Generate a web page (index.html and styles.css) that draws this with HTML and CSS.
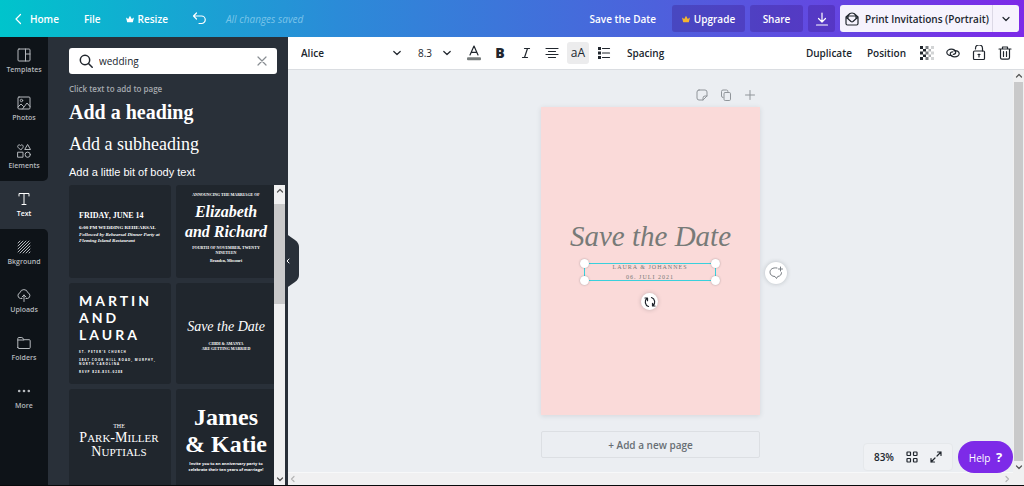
FILE: index.html
```
<!DOCTYPE html>
<html lang="en">
<head>
<meta charset="utf-8">
<title>Save the Date</title>
<link rel="stylesheet" href="styles.css">
</head>
<body>
<header class="topbar">
  <a class="nav-link nav-home" href="#"><svg class="i8" viewBox="0 0 8 12"><path d="M6.500 1.500 2 6l4.500 4.500"/></svg>Home</a>
  <button class="nav-link">File</button>
  <button class="nav-link nav-resize"><svg class="crown" viewBox="0 0 10 10"><path d="M1.500 9 0 3l2.800 2L5 1l2.200 4L10 3 8.500 9z"/></svg>Resize</button>
  <button class="nav-link nav-undo" aria-label="Undo"><svg class="i14" viewBox="0 0 14 14"><path d="M4.500 1 1.500 4l3 3M1.500 4h8a3.500 3.500 0 0 1 0 7.500H7"/></svg></button>
  <span class="saved">All changes saved</span>
  <div class="top-actions">
    <button class="nav-link nav-title">Save the Date</button>
    <button class="top-btn upgrade"><svg class="crown gold" viewBox="0 0 10 10"><path d="M1.500 9 0 3l2.800 2L5 1l2.200 4L10 3 8.500 9z"/></svg>Upgrade</button>
    <button class="top-btn share">Share</button>
    <button class="top-btn download" aria-label="Download"><svg class="i14" viewBox="0 0 14 14"><path d="M7 1v9M3.500 6.500 7 10l3.500-3.500M1.500 13h11"/></svg></button>
    <div class="print-group">
      <button class="print"><svg class="i14" viewBox="0 0 14 14"><path d="M1 5v6.500q0 1.500 1.500 1.500h9q1.500 0 1.500-1.500V5L9 1.500q-2-1-4 0L1 5l5 4.500q1 .7 2 0L13 5M3 6.500V4h8v2.500"/></svg>Print Invitations (Portrait)</button>
      <button class="print-more" aria-label="More print options"><svg class="i8" viewBox="0 0 8 8"><path d="M1 2.500 4 5.500 7 2.500"/></svg></button>
    </div>
  </div>
</header>

<div class="workspace">
  <nav class="rail">
    <div class="rail-upper">
      <a class="rail-item" href="#"><svg class="i14" viewBox="0 0 14 14"><rect x="1" y="1" width="12" height="12" rx="1"/><path d="M8.500 1v12M8.500 6H13"/></svg>Templates</a>
      <a class="rail-item" href="#"><svg class="i14" viewBox="0 0 14 14"><rect x="1" y="1" width="12" height="12" rx="1"/><circle cx="4.500" cy="4.500" r="1.200"/><path d="m1 11 3-3 2.500 2.500M5.500 13l4.500-6 3 3.500"/></svg>Photos</a>
      <a class="rail-item" href="#"><svg class="i14" viewBox="0 0 14 14"><path d="M3.500 5.800.9 3.200C-.1 1.600 2.300-.2 3.500 1.600c1.200-1.800 3.600 0 2.600 1.600zM10.800.8l2.700 4.700H8.100z"/><rect x="1" y="8.200" width="5" height="5"/><circle cx="10.700" cy="10.700" r="2.600"/></svg>Elements</a>
    </div>
    <a class="rail-item active" href="#"><svg class="i14" viewBox="0 0 14 14"><path d="M2 4V1.500h10V4M7 1.500v11M5 12.500h4"/></svg>Text</a>
    <div class="rail-lower">
      <a class="rail-item" href="#"><svg class="i14" viewBox="0 0 14 14"><path d="M1 3l2-2M1 6l5-5M1 9l8-8M1 12 12 1M3 13 13 3M6 13l7-7M9 13l4-4M12 13l1-1"/></svg>Bkground</a>
      <a class="rail-item" href="#"><svg class="i14" viewBox="0 0 14 14"><path d="M5 10.500H3.500A3 3 0 0 1 3 4.700a4 4 0 0 1 7.800 0 3 3 0 0 1-.3 5.800H9M7 13.500V7M5 9l2-2 2 2"/></svg>Uploads</a>
      <a class="rail-item" href="#"><svg class="i14" viewBox="0 0 14 14"><path d="M.8 11.500v-9q0-1 1-1h3q1 0 1.500 1.500l.3.700h5.600q1 0 1 1v6.800q0 1-1 1H1.800q-1 0-1-1zM.8 4h6"/></svg>Folders</a>
      <a class="rail-item" href="#"><svg class="i14 solid" viewBox="0 0 14 14"><circle cx="2.200" cy="7" r="1.300"/><circle cx="7" cy="7" r="1.300"/><circle cx="11.800" cy="7" r="1.300"/></svg>More</a>
    </div>
  </nav>

  <aside class="panel">
    <div class="search">
      <svg class="i14" viewBox="0 0 14 14"><circle cx="6" cy="6" r="4.700"/><path d="m9.500 9.500 3.700 3.700"/></svg>
      <input type="text" value="wedding" aria-label="Search text">
      <button class="clear" aria-label="Clear search"><svg class="i10" viewBox="0 0 10 10"><path d="m1 1 8 8M9 1 1 9"/></svg></button>
    </div>
    <p class="hint">Click text to add to page</p>
    <button class="add-heading">Add a heading</button>
    <button class="add-subheading">Add a subheading</button>
    <button class="add-body">Add a little bit of body text</button>
    <div class="results">
      <div class="cards">
        <article class="card card-friday">
          <h3>FRIDAY, JUNE 14</h3>
          <p class="strong">6:00 PM WEDDING REHEARSAL</p>
          <p class="note">Followed by Rehearsal Dinner Party at Fleming Island Restaurant</p>
        </article>
        <article class="card card-elizabeth">
          <p class="tiny">ANNOUNCING THE MARRIAGE OF</p>
          <h3>Elizabeth<br>and Richard</h3>
          <p class="date">FOURTH OF NOVEMBER, TWENTY<br>NINETEEN</p>
          <p class="tiny">Branden, Missouri</p>
        </article>
        <article class="card card-martin">
          <h3>MARTIN<br>AND<br>LAURA</h3>
          <p>ST. PETER'S CHURCH</p>
          <p>3867 COOK HILL ROAD, MURPHY,<br>NORTH CAROLINA</p>
          <p>RSVP 828-835-0288</p>
        </article>
        <article class="card card-save">
          <h3>Save the Date</h3>
          <p>CHIDI &amp; AMANYA<br>ARE GETTING MARRIED</p>
        </article>
        <article class="card card-park">
          <p>THE</p>
          <h3>P<small>ARK</small>-M<small>ILLER</small><br>N<small>UPTIALS</small></h3>
        </article>
        <article class="card card-james">
          <h3>James<br>&amp; Katie</h3>
          <p>Invite you to an anniversary party to<br>celebrate their ten years of marriage!</p>
        </article>
      </div>
      <div class="scroll-v panel-scroll">
        <svg class="i8" viewBox="0 0 8 8"><path d="M1.500 5 4 2.500 6.500 5"/></svg>
        <span class="thumb"></span>
        <svg class="i8" viewBox="0 0 8 8"><path d="M1.500 3 4 5.500 6.500 3"/></svg>
      </div>
    </div>
    <button class="collapse" aria-label="Hide panel"><svg viewBox="0 0 14 56"><path class="tab" d="M0 0 10 7q4 3 4 7v28q0 4-4 7L0 56z"/><path class="arrow" d="M4 26 2 28l2 2"/></svg></button>
  </aside>

  <main class="editor">
    <div class="toolbar">
      <label class="pick font-pick"><select aria-label="Font"><option>Alice</option></select><svg class="i8" viewBox="0 0 8 8"><path d="M.8 2.500 4 5.500 7.200 2.500"/></svg></label>
      <label class="pick size-pick"><select aria-label="Font size"><option>8.3</option></select><svg class="i8" viewBox="0 0 8 8"><path d="M.8 2.500 4 5.500 7.200 2.500"/></svg></label>
      <div class="tools">
        <button class="tool" aria-label="Text color"><svg class="i16" viewBox="0 0 16 16"><path d="m4 10 4-9 4 9M5.300 7.300h5.400"/><rect class="swatch" x="1" y="12.300" width="14" height="3" rx="1"/></svg></button>
        <button class="tool bold" aria-label="Bold">B</button>
        <button class="tool" aria-label="Italic"><svg class="i14" viewBox="0 0 14 14"><path d="M5.500 2.500h5M3.500 11.500h5M8.500 2.500l-3 9"/></svg></button>
        <button class="tool" aria-label="Align center"><svg class="i14" viewBox="0 0 14 14"><path d="M1 2.500h12M3.500 5.500h7M1 8.500h12M3.500 11.500h7"/></svg></button>
        <button class="tool case" aria-label="Uppercase">aA</button>
        <button class="tool" aria-label="List"><svg class="i14" viewBox="0 0 14 14"><path d="M5.500 2.500h7M5.500 7h7M5.500 11.500h7"/><path class="dots" d="M1 1h3v3H1zM1 5.500h3v3H1zM1 10h3v3H1z"/></svg></button>
      </div>
      <button class="word spacing">Spacing</button>
      <div class="tools-right">
        <button class="word">Duplicate</button>
        <button class="word">Position</button>
        <div class="tools">
          <button class="tool" aria-label="Transparency"><svg class="i14 checks" viewBox="0 0 14 14"><path d="M0 0h3v3H0zM0 5.500h3v3H0zM0 11h3v3H0zM3 3h3v2.500H3zM3 8.500h3V11H3z"/><path opacity=".6" d="M5.500 0h3v3h-3zM5.500 5.500h3v3h-3zM5.500 11h3v3h-3z"/><path opacity=".35" d="M8.500 3h2.500v2.500H8.500zM8.500 8.500h2.500V11H8.500z"/><path opacity=".2" d="M11 0h3v3h-3zM11 5.500h3v3h-3zM11 11h3v3h-3z"/></svg></button>
          <button class="tool" aria-label="Link"><svg class="i14" viewBox="0 0 14 14"><path d="M6 9.300C3.500 10 1 8.700 .8 6.700.7 4.500 3 3.200 5.300 3.200c2.700 0 4.500 1.300 4.400 3.100 0 1.200-1 2-2.400 2M8 4.900c2.600-.7 5 .5 5.200 2.500.1 2.200-2.200 3.500-4.500 3.500-2.700 0-4.500-1.300-4.400-3.100 0-1.200 1-2 2.400-2"/></svg></button>
          <button class="tool" aria-label="Lock"><svg class="i16" viewBox="0 0 16 16"><rect x="2.500" y="6" width="11" height="8.500" rx="1"/><path d="M4.500 4V3.500a3.500 3.500 0 0 1 7 0V6M8 9v3M7 9.500h2"/></svg></button>
          <button class="tool" aria-label="Delete"><svg class="i14" viewBox="0 0 14 14"><path d="M1 3h12M4.500 3V1h5v2M2.500 3v8.500q0 1.700 1.500 1.700h6q1.500 0 1.500-1.700V3M5.500 5.500v5M8.500 5.500v5"/></svg></button>
        </div>
      </div>
    </div>

    <div class="stage">
      <div class="canvas">
        <div class="sheet">
          <div class="page-tools">
            <button aria-label="Notes"><svg class="i12" viewBox="0 0 12 12"><path d="M3 1h6q2 0 2 2v4l-4 4H3q-2 0-2-2V3q0-2 2-2zM7 11V9q0-2 2-2h2"/></svg></button>
            <button aria-label="Copy page"><svg class="i12" viewBox="0 0 12 12"><path d="M3 8.500q-1.500 0-1.500-1.500V2.500q0-1.500 1.500-1.500h3.500Q8 1 8 2.500"/><rect x="4" y="3.500" width="6.500" height="8" rx="1.200"/></svg></button>
            <button aria-label="Add page"><svg class="i12" viewBox="0 0 12 12"><path d="M6 1.500v9M1.500 6h9"/></svg></button>
          </div>
          <div class="page">
            <h1>Save the Date</h1>
            <div class="selection">
              <p>LAURA &amp; JOHANNES<br>06. JULI 2021</p>
              <i class="handle tl"></i><i class="handle tr"></i><i class="handle bl"></i><i class="handle br"></i>
              <button class="round rotate" aria-label="Rotate"><svg class="i12" viewBox="0 0 12 12"><path d="M4.500 10.500A4.800 4.800 0 0 1 3 2.300M1 2h2.500v2.700M7.500 1.500A4.800 4.800 0 0 1 9 9.700M11 10H8.500V7.300"/></svg></button>
            </div>
            <button class="round comment" aria-label="Add comment"><svg class="i14" viewBox="0 0 14 14"><path d="M8 2C3.500 1.200 1 3.500 1 6.200 1 8.700 3 10.500 6 10.500l1.500 2 1.200-2c2.500-.3 3.800-1.800 3.800-3.800M11.500 1v4M9.500 3h4"/></svg></button>
          </div>
          <button class="add-page">+ Add a new page</button>
        </div>
        <div class="zoombar">
          <button class="zoom">83%</button>
          <button aria-label="Grid view"><svg class="i12" viewBox="0 0 12 12"><rect x="1" y="1" width="3.500" height="3.500" rx=".5"/><rect x="7.500" y="1" width="3.500" height="3.500" rx=".5"/><rect x="1" y="7.500" width="3.500" height="3.500" rx=".5"/><rect x="7.500" y="7.500" width="3.500" height="3.500" rx=".5"/></svg></button>
          <button aria-label="Full screen"><svg class="i12" viewBox="0 0 12 12"><path d="M7.500 1H11v3.500M11 1 7 5M4.500 11H1V7.500M1 11l4-4"/></svg></button>
        </div>
        <button class="help">Help <b>?</b></button>
      </div>
      <div class="scroll-v">
        <svg class="i8" viewBox="0 0 8 8"><path d="M1.500 5 4 2.500 6.500 5"/></svg>
        <span class="thumb"></span>
        <svg class="i8" viewBox="0 0 8 8"><path d="M1.500 3 4 5.500 6.500 3"/></svg>
      </div>
    </div>
    <div class="scroll-h">
      <svg class="i8" viewBox="0 0 8 8"><path d="M5 1.500 2.500 4 5 6.500"/></svg>
      <svg class="i8" viewBox="0 0 8 8"><path d="M3 1.500 5.500 4 3 6.500"/></svg>
    </div>
  </main>
</div>
</body>
</html>
```
FILE: styles.css
```
* { box-sizing: border-box; }
body {
  margin: 0;
  height: 100vh;
  display: flex;
  flex-direction: column;
  overflow: hidden;
  background: #ebeef2;
  border-bottom: 1px solid #08090b;
  font: 600 10px/16px "Open Sans", sans-serif;
  color: #20262d;
}
button, input, select { font: inherit; color: inherit; border: 0; background: none; padding: 0; margin: 0; }
a { color: inherit; text-decoration: none; }
h1, h3, p { margin: 0; }
svg { display: block; flex: none; fill: none; stroke: currentColor; stroke-width: 1.2; stroke-linecap: round; stroke-linejoin: round; }
.i8 { width: 8px; height: 8px; }
.i10 { width: 10px; height: 10px; }
.i12 { width: 12px; height: 12px; }
.i14 { width: 14px; height: 14px; }
.i16 { width: 16px; height: 16px; }

/* Top bar */
.topbar {
  flex: none;
  height: 37px;
  padding: 0 5px 0 14px;
  display: flex;
  align-items: center;
  background: linear-gradient(90deg, #00c4cc, #2b8bd8 33%, #4d61dc 64%, #7d2ae8);
  color: #fff;
}
.nav-link { display: flex; align-items: center; white-space: nowrap; }
.nav-home { gap: 8px; margin-right: 25px; }
.nav-home svg { height: 12px; }
.nav-resize { gap: 4px; margin: 0 24px 0 25px; }
.saved { margin-left: 20px; color: #8fd0ef; font-weight: 400; font-style: italic; white-space: nowrap; opacity: .8; }
.crown { width: 8px; height: 10px; fill: currentColor; stroke: none; }
.gold { color: #f5b52e; }
.top-actions { display: flex; align-items: center; gap: 5px; margin-left: auto; }
.nav-title { margin-right: 11px; }
.top-btn { height: 27px; display: flex; align-items: center; justify-content: center; gap: 4px; border-radius: 3px; background: rgba(55, 20, 130, .3); }
.upgrade { width: 73px; }
.share { width: 53px; }
.download { width: 27px; }
.print-group { display: flex; height: 27px; border-radius: 3px; background: #f6f3fd; color: #20262d; }
.print { display: flex; align-items: center; gap: 6px; width: 152px; padding-left: 5px; white-space: nowrap; }
.print-more { width: 27px; display: grid; place-items: center; border-left: 1px solid #dcd9e6; }

.workspace { flex: 1; min-height: 0; display: flex; }

/* Navigation rail */
.rail { width: 48px; flex: none; display: flex; flex-direction: column; background: #293039; color: #b5b9bd; }
.rail-upper, .rail-lower { background: #0e1318; }
.rail-upper { border-radius: 0 0 5px 0; }
.rail-lower { flex: 1; border-radius: 0 5px 0 0; }
.rail-item { height: 48px; padding-top: 11px; display: flex; flex-direction: column; align-items: center; gap: 2px; font-size: 7px; line-height: 12px; }
.rail-item svg { stroke-width: 1; }
.rail-item.active { color: #fff; }
.solid { fill: currentColor; stroke: none; }

/* Text panel */
.panel { position: relative; z-index: 2; width: 240px; flex: none; display: flex; flex-direction: column; align-items: flex-start; padding: 11px 3px 0 21px; background: #293039; color: #fff; }
.search { width: 208px; height: 26px; flex: none; display: flex; align-items: center; gap: 6px; padding: 0 10px; background: #fff; border-radius: 3px; color: #20262d; }
.search svg { stroke-width: 1.5; }
.search input { flex: 1; min-width: 0; font-weight: 400; outline: 0; }
.search .clear { color: #888d92; }
.search .clear svg { stroke-width: 1.2; }
.hint { margin-top: 8px; font-size: 8px; line-height: 14px; color: #a6aaaf; }
.add-heading { font: bold 20px/32px "Liberation Serif", serif; }
.add-subheading { font: 18px/32px "Liberation Serif", serif; }
.add-body { font: 11px/24px "Liberation Sans", sans-serif; }
.results { align-self: stretch; flex: 1; min-height: 0; margin-top: 1px; display: flex; }
.cards { flex: 1; min-width: 0; overflow: hidden; display: grid; grid-template-columns: 102px 102px; grid-template-rows: 93px 101px 101px; gap: 5px; }
.card { background: #20262d; border-radius: 3px; display: flex; flex-direction: column; font: bold 5px/6px "Liberation Serif", serif; white-space: nowrap; }
.card-friday { padding: 24px 10px 0; }
.card-friday h3 { font-size: 8px; line-height: 14px; }
.card-friday .strong { line-height: 9px; }
.card-friday .note { white-space: normal; font-style: italic; }
.card-elizabeth, .card-save, .card-park, .card-james { text-align: center; padding-right: 2px; }
.card-elizabeth { padding-top: 7px; }
.card-elizabeth .tiny { font-size: 4px; }
.card-elizabeth h3 { font: italic bold 16px/20px "Liberation Serif", serif; margin: 4px 0 3px; }
.card-elizabeth .date { font-size: 4px; line-height: 5px; margin-bottom: 3px; }
.card-martin { padding: 9px 10px; gap: 4px; font: bold 3px/4px "Open Sans", sans-serif; letter-spacing: 1px; }
.card-martin h3 { font: 700 14px/17px Lato, sans-serif; letter-spacing: 3px; margin-bottom: 3px; }
.card-save { justify-content: center; font-size: 4px; line-height: 5px; }
.card-save h3 { font: italic 14px/20px "Liberation Serif", serif; margin-bottom: 4px; }
.card-park { justify-content: center; padding-top: 2px; }
.card-park p { font-weight: 400; font-size: 6px; line-height: 9px; }
.card-park h3 { font: 14px/13px "Liberation Serif", serif; }
.card-park small { font-size: 11px; }
.card-james { padding-top: 15px; }
.card-james h3 { font: bold 24px/27px "Liberation Serif", serif; margin-bottom: 3px; }
.card-james p { font: bold 4px/6px "Open Sans", sans-serif; }
.collapse { position: absolute; left: 237px; top: 196px; width: 14px; height: 56px; }
.collapse svg { width: 14px; height: 56px; }
.tab { fill: #293039; stroke: none; }
.arrow { stroke: #fff; stroke-width: 1; }

/* Scroll bars */
.scroll-v { width: 11px; flex: none; display: flex; flex-direction: column; align-items: center; gap: 2px; padding: 2px 0; background: #f0f0f1; color: #555; }
.scroll-v .thumb { width: 9px; flex: 1; background: #c9c9ca; }
.panel-scroll { gap: 9px; }
.panel-scroll .thumb { width: 11px; flex: none; height: 100px; margin-bottom: auto; }
.scroll-h { height: 12px; flex: none; display: flex; align-items: center; justify-content: space-between; padding: 0 13px 0 1px; background: #f0f0f1; color: #b5b5b6; }

/* Toolbar */
.editor { flex: 1; min-width: 0; display: flex; flex-direction: column; }
.toolbar { height: 33px; flex: none; display: flex; align-items: center; padding: 0 8px 0 13px; background: #fff; border-bottom: 1px solid #dadde1; }
.pick { display: grid; align-items: center; }
.pick select { grid-area: 1 / 1; width: 100%; appearance: none; outline: 0; }
.pick svg { grid-area: 1 / 1; justify-self: end; pointer-events: none; }
.font-pick { width: 100px; margin-right: 17px; }
.size-pick { width: 33px; margin-right: 12px; font-weight: 400; }
.tools { display: flex; gap: 4px; }
.tool { width: 22px; height: 22px; display: grid; place-items: center; border-radius: 3px; }
.bold { font-size: 14px; font-weight: 800; }
.case { background: #ececed; font-size: 12px; font-weight: 400; }
.swatch { fill: #777c7c; stroke: none; }
.dots, .checks { fill: currentColor; stroke: none; }
.spacing { margin-left: 12px; }
.tools-right { margin-left: auto; display: flex; align-items: center; gap: 15px; }
.tools-right .tools { margin-left: -5px; }

/* Canvas */
.stage { flex: 1; min-height: 0; display: flex; }
.canvas { position: relative; flex: 1; display: flex; justify-content: center; padding-top: 18px; border-bottom: 1px solid #f7f8f9; }
.sheet { width: 219px; }
.page-tools { height: 19px; display: flex; align-items: flex-start; justify-content: flex-end; gap: 12px; padding: 1px 4px 0 0; color: #90959a; }
.page-tools svg { stroke-width: 1; }
.page { position: relative; height: 308px; padding: 107px 24px 0; background: #fadad9; box-shadow: 0 1px 5px rgba(40, 50, 60, .12); color: #777a78; }
.page h1 { font: italic 29px/44px "Liberation Serif", serif; text-align: center; white-space: nowrap; }
.selection { position: relative; width: 132px; height: 18px; margin: 5px 0 0 19px; border: 1px solid #39d0dc; }
.selection p { font: 6px/10px "Liberation Serif", serif; text-align: center; letter-spacing: 1px; margin-top: -2px; white-space: nowrap; }
.handle { position: absolute; width: 9px; height: 9px; border-radius: 50%; background: #fff; box-shadow: 0 0 2px rgba(40, 50, 60, .4); }
.tl { left: -5px; top: -5px; }
.tr { right: -5px; top: -5px; }
.bl { left: -5px; bottom: -5px; }
.br { right: -5px; bottom: -5px; }
.round { position: absolute; display: grid; place-items: center; border-radius: 50%; background: #fff; box-shadow: 0 0 4px rgba(40, 50, 60, .25); }
.rotate { left: 56px; top: 29px; width: 17px; height: 17px; color: #20262d; }
.comment { left: 224px; top: 155px; width: 22px; height: 22px; color: #777c82; }
.comment svg { stroke-width: 1; }
.add-page { width: 100%; height: 27px; margin-top: 16px; border: 1px solid #dcdfe3; border-radius: 2px; color: #686e74; }
.zoombar { position: absolute; right: 60px; bottom: 1px; height: 28px; display: flex; align-items: center; gap: 12px; padding: 0 10px; background: #eff1f4; border: 1px solid #e5e8eb; border-radius: 4px; }
.help { position: absolute; right: 0; bottom: -1px; width: 55px; height: 32px; border-radius: 16px; background: #7d2ae8; color: #fff; font-weight: 400; }
.help b { margin-left: 3px; font-size: 13px; }
```
